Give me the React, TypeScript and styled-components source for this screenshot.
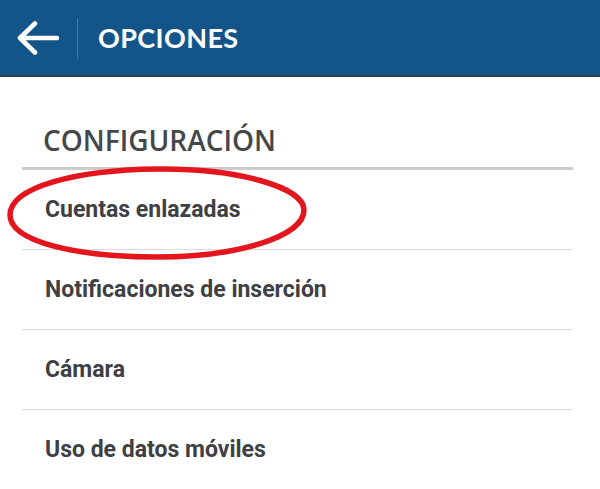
import styled, { createGlobalStyle } from 'styled-components';

const GlobalStyle = createGlobalStyle`
    html, body {
        margin: 0;
        padding: 0;
        background: #ffffff;
    }

    body {
        font-family: Roboto, "Noto Sans", "Liberation Sans", sans-serif;
        -webkit-font-smoothing: antialiased;
    }
`;

const items = [
    'Cuentas enlazadas',
    'Notificaciones de inserción',
    'Cámara',
    'Uso de datos móviles',
];

function BackArrow() {
    return (
        <svg width="42" height="34" viewBox="0 0 42 34" fill="none">
            <path
                d="M3 17 H40 M3 17 L18 2.5 M3 17 L18 31.5"
                stroke="#ffffff"
                strokeWidth="4.6"
                strokeLinecap="round"
                strokeLinejoin="round"
            />
        </svg>
    );
}

// red hand-drawn ring round the first entry
function Highlight() {
    return (
        <Circle viewBox="0 0 302 96" fill="none">
            <path
                d="M151 4 C230 3 298 22 298 45 C298 72 230 92 151 92 C72 92 4 77 4 50 C4 22 70 5 151 4 Z"
                stroke="#e3161e"
                strokeWidth="5.5"
            />
        </Circle>
    );
}

function App() {
    return (
        <>
            <GlobalStyle />
            <Screen>
                <TopBar>
                    <BackButton>
                        <BackArrow />
                    </BackButton>
                    <Divider />
                    <Title>OPCIONES</Title>
                </TopBar>

                <Content>
                    <SectionHeading>CONFIGURACIÓN</SectionHeading>
                    <List>
                        {items.map((label, i) => (
                            <Row key={label}>
                                {label}
                                {i === 0 && <Highlight />}
                            </Row>
                        ))}
                    </List>
                </Content>
            </Screen>
        </>
    );
}

export default App;

const Screen = styled.div`
    width: 600px;
    height: 489px;
    overflow: hidden;
    background: #ffffff;
`;

const TopBar = styled.header`
    height: 75px;
    background: #135589;
    border-bottom: 2px solid #2c3e50;
    display: flex;
    align-items: center;
`;

const BackButton = styled.div`
    width: 77px;
    height: 100%;
    display: flex;
    align-items: center;
    justify-content: center;
    padding-right: 2px;
    box-sizing: border-box;
`;

const Divider = styled.span`
    width: 1px;
    height: 41px;
    margin-top: 1px;
    background: #4378a6;
`;

const Title = styled.h1`
    margin: 0 0 0 20px;
    font-family: Lato, "Open Sans", sans-serif;
    font-weight: 700;
    font-size: 27px;
    letter-spacing: 0.4px;
    color: #ffffff;
`;

const Content = styled.main`
    padding: 0 27px 0 22px;
`;

const SectionHeading = styled.h2`
    margin: 0;
    height: 93px;
    box-sizing: border-box;
    padding: 0 0 13px 21px;
    display: flex;
    align-items: flex-end;
    font-family: "Open Sans", sans-serif;
    font-weight: 600;
    font-size: 28px;
    line-height: 1;
    color: #45474a;
    border-bottom: 3px solid #cccccc;
`;

const List = styled.ul`
    list-style: none;
    margin: 0;
    padding: 0;
`;

const Row = styled.li`
    position: relative;
    height: 79px;
    padding-left: 23px;
    display: flex;
    align-items: center;
    font-family: Roboto, sans-serif;
    font-weight: 700;
    font-size: 23px;
    color: #3e4043;
    border-bottom: 1px solid #dcdcdc;
`;

const Circle = styled.svg`
    position: absolute;
    left: -16px;
    top: -5px;
    width: 302px;
    height: 96px;
    pointer-events: none;
`;
